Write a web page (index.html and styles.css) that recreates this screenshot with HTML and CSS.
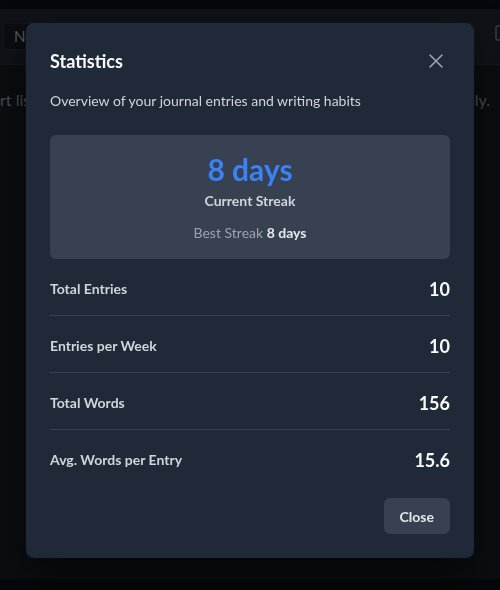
FILE: index.html
```html
<!DOCTYPE html>
<html lang="en">
<head>
<meta charset="utf-8">
<title>Statistics</title>
<link rel="stylesheet" href="styles.css">
</head>
<body>
<div class="app">
  <div class="topstrip"></div>
  <header class="toolbar">
    <button class="new-btn">New Entry</button>
    <span class="tool-icon">
      <svg width="14" height="16" viewBox="0 0 14 16"><rect x="1" y="1" width="12" height="14" rx="1.5" fill="none" stroke="#3a3d44" stroke-width="1.5"/></svg>
    </span>
  </header>
  <main class="main">
    <p class="hint"><span>rt list</span><span>ely.</span></p>
  </main>
  <div class="bottomstrip"></div>
</div>

<div class="overlay">
  <div class="modal" role="dialog" aria-labelledby="stats-title">
    <div class="modal-head">
      <h2 id="stats-title" class="modal-title">Statistics</h2>
      <button class="icon-btn" aria-label="Close">
        <svg width="16" height="16" viewBox="0 0 16 16"><path d="M2 2 L14 14 M14 2 L2 14" stroke="#9ca3af" stroke-width="1.6" stroke-linecap="round" fill="none"/></svg>
      </button>
    </div>
    <p class="modal-desc">Overview of your journal entries and writing habits</p>

    <div class="streak">
      <div class="streak-value">8 days</div>
      <div class="streak-label">Current Streak</div>
      <div class="streak-best">Best Streak <strong>8 days</strong></div>
    </div>

    <div class="stats">
      <div class="stat-row"><span class="stat-label">Total Entries</span><span class="stat-value">10</span></div>
      <div class="stat-row"><span class="stat-label">Entries per Week</span><span class="stat-value">10</span></div>
      <div class="stat-row"><span class="stat-label">Total Words</span><span class="stat-value">156</span></div>
      <div class="stat-row"><span class="stat-label">Avg. Words per Entry</span><span class="stat-value">15.6</span></div>
    </div>

    <div class="modal-foot">
      <button class="btn-close">Close</button>
    </div>
  </div>
</div>
</body>
</html>
```

FILE: styles.css
```css
* { box-sizing: border-box; }

html, body {
  margin: 0;
  padding: 0;
  height: 100%;
}

body {
  font-family: Lato, "Open Sans", "Noto Sans", sans-serif;
  background: #0b0d11;
  color: #e5e7eb;
  overflow: hidden;
}

.app {
  height: 590px;
  display: flex;
  flex-direction: column;
}

.topstrip {
  height: 9px;
  background: #06070a;
}

.toolbar {
  height: 56px;
  background: #101217;
  border-bottom: 1px solid #15171c;
  display: flex;
  align-items: center;
  justify-content: space-between;
  padding: 0 0 0 3px;
}

.new-btn {
  height: 27px;
  margin-top: -1px;
  background: #0b0d10;
  border: 1px solid #14161b;
  border-radius: 4px;
  color: #55585e;
  font-family: inherit;
  font-size: 15px;
  padding: 0 10px;
}

.tool-icon {
  display: flex;
  margin-right: -9px;
  margin-top: -7px;
}

.main {
  flex: 1;
  padding: 0;
}

.hint {
  margin: 25px 0 0;
  display: flex;
  justify-content: space-between;
  color: #4b4e55;
  font-size: 16px;
  padding-right: 10px;
}

.bottomstrip {
  height: 11px;
  background: #06070a;
}

.overlay {
  position: fixed;
  inset: 0;
  display: flex;
  justify-content: center;
  align-items: flex-start;
  padding-top: 23px;
}

.modal {
  width: 448px;
  background: #1f2937;
  border-radius: 8px;
  padding: 24px;
  box-shadow: 0 20px 40px rgba(0, 0, 0, 0.5), 0 0 0 1px rgba(255, 255, 255, 0.02);
}

.modal-head {
  display: flex;
  align-items: center;
  justify-content: space-between;
  height: 28px;
}

.modal-title {
  margin: 0;
  font-size: 18px;
  line-height: 28px;
  font-weight: 700;
  color: #f9fafb;
}

.icon-btn {
  width: 28px;
  height: 28px;
  padding: 0;
  border: 0;
  background: transparent;
  display: flex;
  align-items: center;
  justify-content: center;
}

.modal-desc {
  margin: 16px 0 0;
  font-size: 14px;
  line-height: 20px;
  color: #d1d5db;
}

.streak {
  margin-top: 24px;
  background: #374151;
  border-radius: 6px;
  padding: 16px;
  text-align: center;
}

.streak-value {
  font-size: 30px;
  line-height: 36px;
  font-weight: 700;
  color: #3b82f6;
}

.streak-label {
  margin-top: 4px;
  font-size: 14px;
  line-height: 20px;
  font-weight: 700;
  color: #d1d5db;
}

.streak-best {
  margin-top: 12px;
  font-size: 14px;
  line-height: 20px;
  color: #9ca3af;
}

.streak-best strong {
  color: #e5e7eb;
  font-weight: 700;
}

.stats {
  margin-top: 16px;
  display: flex;
  flex-direction: column;
  gap: 16px;
}

.stat-row {
  display: flex;
  align-items: center;
  justify-content: space-between;
  padding-bottom: 12px;
  border-bottom: 1px solid #374151;
}

.stat-row:last-child {
  padding-bottom: 0;
  border-bottom: 0;
}

.stat-label {
  font-size: 14px;
  line-height: 20px;
  font-weight: 700;
  color: #d1d5db;
}

.stat-value {
  font-size: 18px;
  line-height: 28px;
  font-weight: 700;
  color: #f9fafb;
}

.modal-foot {
  margin-top: 24px;
  display: flex;
  justify-content: flex-end;
}

.btn-close {
  height: 36px;
  padding: 0 16px;
  background: #374151;
  border: 0;
  border-radius: 6px;
  color: #e5e7eb;
  font-family: inherit;
  font-size: 14px;
  font-weight: 700;
}
```
